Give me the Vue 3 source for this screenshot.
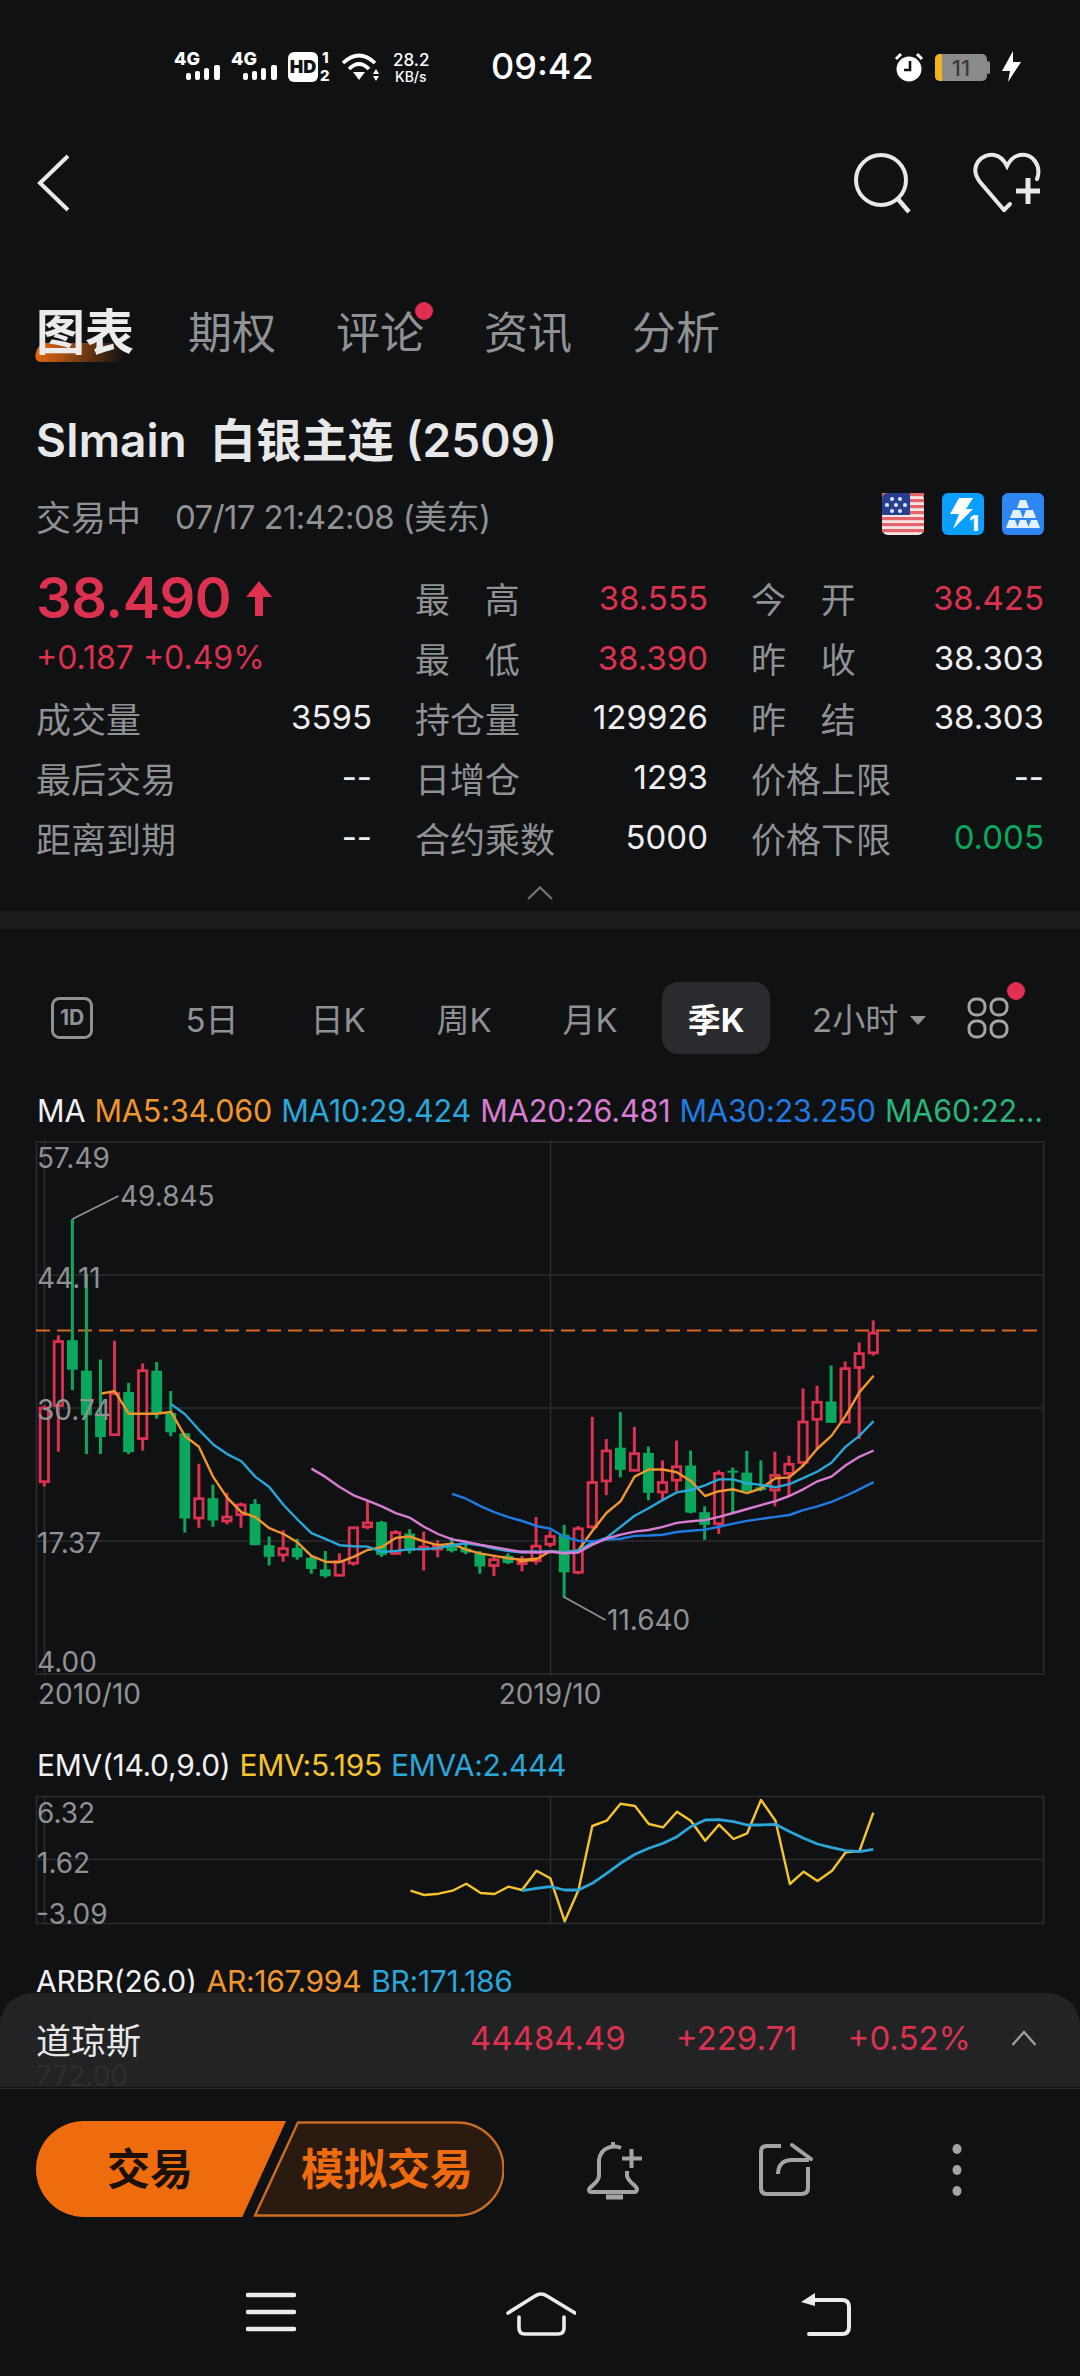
<script setup>
const red = '#dc3250'
const green = '#0aa85c'
const x3 = (z) => z / 2.8
const x4 = (z) => 520 + z / 2.8
const y3 = (z) => 950 + z / 2.0632
const y4 = (z) => 1080 + z / 2.529
const cx = (i) => 44.3 + 14.05 * i

const raw3 = [
  ['r', 940, 945, 1097, 1107], ['r', 795, 808, 940, 1035], ['g', 555, 805, 866, 908], ['g', 668, 868, 960, 1040],
  ['g', 845, 960, 1005, 1040], ['r', 806, 915, 1000, 1000], ['g', 893, 912, 1036, 1040], ['r', 853, 868, 1008, 1033],
  ['g', 850, 868, 955, 967], ['g', 910, 955, 995, 1003], ['g', 997, 997, 1173, 1202], ['r', 1060, 1132, 1172, 1192],
  ['g', 1103, 1131, 1177, 1190], ['r', 1120, 1170, 1178, 1185], ['r', 1140, 1145, 1165, 1192], ['g', 1133, 1143, 1228, 1228],
  ['g', 1210, 1228, 1252, 1270], ['r', 1197, 1235, 1248, 1262], ['g', 1215, 1234, 1253, 1258], ['g', 1250, 1254, 1277, 1287],
  ['g', 1240, 1278, 1292, 1295], ['r', 1245, 1262, 1290, 1292], ['r', 1190, 1192, 1265, 1270], ['r', 1137, 1182, 1190, 1195],
  ['g', 1178, 1180, 1248, 1252], ['r', 1197, 1202, 1245, 1247], ['g', 1195, 1204, 1240, 1245], ['r', 1200, 1232, 1236, 1280],
  ['r', 1218, 1230, 1236, 1253], ['g', 1212, 1228, 1240, 1243], ['g', 1225, 1235, 1243, 1247], ['g', 1240, 1245, 1272, 1287],
  ['r', 1250, 1258, 1270, 1292], ['g', 1245, 1250, 1265, 1267], ['r', 1250, 1260, 1266, 1282], ['r', 1170, 1230, 1260, 1268],
  ['r', 1198, 1210, 1226, 1232]
]
const raw4 = [
  ['g', 1125, 1150, 1245, 1310], ['r', 1128, 1135, 1245, 1250], ['r', 852, 1018, 1130, 1135], ['r', 908, 938, 1014, 1050],
  ['g', 840, 930, 986, 1005], ['r', 877, 945, 987, 990], ['g', 927, 943, 1044, 1063], ['r', 962, 1018, 1042, 1060],
  ['r', 912, 978, 1012, 1040], ['g', 937, 975, 1094, 1096], ['g', 1078, 1093, 1125, 1163], ['r', 987, 995, 1122, 1148],
  ['g', 980, 988, 992, 1095], ['g', 938, 993, 1040, 1040], ['g', 962, 1030, 1037, 1040], ['r', 940, 1000, 1037, 1078],
  ['r', 950, 972, 995, 1050], ['r', 780, 865, 967, 975], ['r', 773, 815, 858, 935], ['g', 722, 813, 867, 867],
  ['r', 712, 730, 865, 865], ['r', 664, 692, 727, 908], ['r', 608, 640, 690, 697]
]
const toCandle = (fy, offset) => (c, i) => ({
  x: cx(i + offset), up: c[0] === 'r',
  hi: fy(c[1]), top: fy(c[2]), bot: fy(c[3]), lo: fy(c[4])
})
const candles = [...raw3.map(toCandle(y3, 0)), ...raw4.map(toCandle(y4, 37))]

const pts = (a3, a4) => {
  const out = []
  for (let i = 0; i < a3.length; i += 2) out.push(`${x3(a3[i]).toFixed(1)},${y3(a3[i + 1]).toFixed(1)}`)
  for (let i = 0; i < a4.length; i += 2) out.push(`${x4(a4[i]).toFixed(1)},${y4(a4[i + 1]).toFixed(1)}`)
  return out.join(' ')
}
const maLines = [
  { color: '#f0962e', points: pts(
    [285,915,321,910,361,957,400,957,439,957,479,953,518,1003,557,1025,597,1087,636,1130,676,1160,715,1170,754,1193,794,1205,833,1222,872,1250,911,1262,951,1263,990,1252,1029,1238,1069,1232,1108,1213,1147,1210,1187,1220,1226,1228,1266,1225,1305,1237,1344,1245,1384,1250,1423,1255,1462,1258,1502,1256],
    [0,1218,46,1212,85,1192,124,1195,163,1190,203,1140,242,1095,282,1065,321,1003,360,985,400,985,439,992,479,1015,518,1052,557,1040,597,1035,636,1045,675,1033,715,1007,754,1005,793,975,833,932,872,900,911,850,950,790,990,748]) },
  { color: '#2ba6d8', points: pts(
    [479,937,518,958,557,990,597,1020,636,1040,676,1055,715,1087,754,1108,794,1145,833,1175,872,1203,911,1215,951,1228,990,1230,1029,1231,1069,1242,1108,1240,1147,1236,1187,1236,1226,1234,1266,1228,1305,1224,1344,1228,1384,1235,1423,1240,1462,1243,1502,1241],
    [0,1193,46,1193,85,1192,124,1195,163,1190,203,1170,242,1158,282,1130,321,1102,360,1083,400,1062,439,1043,479,1037,518,1025,557,1010,597,1010,636,1020,675,1024,715,1030,754,1022,793,1007,833,990,872,968,911,928,950,900,990,863]) },
  { color: '#1f7ce2', points: pts(
    [1266,1122,1305,1132,1344,1147,1384,1160,1423,1170,1462,1178,1502,1188],
    [0,1113,46,1128,85,1135,124,1155,163,1165,203,1167,242,1162,282,1160,321,1153,360,1152,400,1150,439,1143,479,1140,518,1137,557,1130,597,1122,636,1115,675,1110,715,1105,754,1100,793,1088,833,1078,872,1067,911,1052,950,1035,990,1017]) },
  { color: '#d87dd2', points: pts(
    [872,1070,911,1087,951,1108,990,1125,1029,1136,1069,1148,1108,1162,1147,1171,1187,1190,1226,1205,1266,1216,1305,1221,1344,1227,1384,1232,1423,1237,1462,1242,1502,1243],
    [0,1193,46,1195,85,1193,124,1197,163,1195,203,1175,242,1160,282,1150,321,1142,360,1138,400,1130,439,1120,479,1116,518,1113,557,1105,597,1095,636,1085,675,1075,715,1065,754,1052,793,1035,833,1015,872,1003,911,975,950,953,990,937]) }
]
const z5 = (a) => {
  const out = []
  for (let i = 0; i < a.length; i += 2) out.push(`${(a[i] / 1.452).toFixed(1)},${(1720 + a[i + 1] / 3).toFixed(1)}`)
  return out.join(' ')
}
const emvLine = z5([596,512,616,525,637,521,657,512,677,491,698,519,718,522,738,500,758,510,779,452,799,475,820,604,840,510,860,318,881,302,901,251,922,258,942,312,963,322,983,275,1003,302,1024,362,1044,314,1065,357,1085,340,1105,240,1126,302,1147,492,1167,455,1187,483,1208,452,1228,397,1248,393,1268,278])
const emvaLine = z5([758,512,779,505,799,500,820,510,840,510,860,490,881,460,901,430,922,403,942,385,963,370,983,350,1003,320,1024,300,1044,299,1065,305,1085,315,1105,315,1126,313,1147,335,1167,355,1187,372,1208,383,1228,392,1248,395,1268,388])

const gridY = [1142, 1275, 1408, 1541, 1674]
const axis = [
  { t: '57.49', y: 1168 }, { t: '44.11', y: 1288 }, { t: '30.74', y: 1420 }, { t: '17.37', y: 1553 }, { t: '4.00', y: 1672 }
]
const tabs = ['期权', '评论', '资讯', '分析']
const periods = ['5日', '日K', '周K', '月K']

const stats = [
  { col: 2, row: 1, label: '最 高', value: '38.555', spread: true, cls: 'up' },
  { col: 3, row: 1, label: '今 开', value: '38.425', spread: true, cls: 'up' },
  { col: 2, row: 2, label: '最 低', value: '38.390', spread: true, cls: 'up' },
  { col: 3, row: 2, label: '昨 收', value: '38.303', spread: true },
  { col: 1, row: 3, label: '成交量', value: '3595' },
  { col: 2, row: 3, label: '持仓量', value: '129926' },
  { col: 3, row: 3, label: '昨 结', value: '38.303', spread: true },
  { col: 1, row: 4, label: '最后交易', value: '--' },
  { col: 2, row: 4, label: '日增仓', value: '1293' },
  { col: 3, row: 4, label: '价格上限', value: '--' },
  { col: 1, row: 5, label: '距离到期', value: '--' },
  { col: 2, row: 5, label: '合约乘数', value: '5000' },
  { col: 3, row: 5, label: '价格下限', value: '0.005', cls: 'down' }
]
const flagStripes = [0, 1, 2, 3, 4, 5, 6]
</script>

<template>
  <div class="page">
    <div class="main">
      <header class="status">
        <svg class="st-left" viewBox="170 45 265 40" width="265" height="40">
          <g fill="#fff">
            <text x="174" y="64" class="st-4g">4G</text>
            <rect x="186" y="72" width="5" height="7" rx="2" /><rect x="195" y="70" width="5" height="9" rx="2" /><rect x="204" y="67" width="5" height="12" rx="2" /><rect x="214" y="64" width="6" height="15" rx="2" />
            <text x="231" y="64" class="st-4g">4G</text>
            <rect x="243" y="72" width="5" height="7" rx="2" /><rect x="252" y="70" width="5" height="9" rx="2" /><rect x="261" y="67" width="5" height="12" rx="2" /><rect x="271" y="64" width="6" height="15" rx="2" />
            <rect x="288" y="51" width="30" height="30" rx="6" />
            <text x="303" y="72" text-anchor="middle" class="st-hd">HD</text>
            <text x="322" y="62" class="st-sim">1</text>
            <text x="320" y="80" class="st-sim">2</text>
            <path d="M353 71h12l-6 8z" />
            <path d="M376 68l3 5h-6zM376 80l3-5h-6z" />
          </g>
          <g fill="none" stroke="#fff" stroke-width="3.6">
            <path d="M343 62 Q359 47 375 62" />
            <path d="M349 68 Q359 58 369 68" />
          </g>
          <text x="393" y="65" class="st-speed" fill="#fff">28.2</text>
          <text x="395" y="81" class="st-unit" fill="#fff">KB/s</text>
        </svg>
        <div class="clock">09:42</div>
        <svg class="st-right" viewBox="890 45 135 40" width="135" height="40">
          <circle cx="909" cy="68" r="12.5" fill="#fff" />
          <path d="M910 60v9h-6" fill="none" stroke="#101113" stroke-width="2.6" />
          <path d="M896 58l5-5M922 58l-5-5" stroke="#fff" stroke-width="3" />
          <rect x="935" y="53" width="52" height="27" rx="5" fill="#8b8b8b" />
          <path d="M940 53h2v27h-2a5 5 0 0 1-5-5V58a5 5 0 0 1 5-5z" fill="#f0b51e" />
          <rect x="987" y="60" width="3" height="13" rx="1.5" fill="#8b8b8b" />
          <text x="961" y="75" text-anchor="middle" class="st-batt" fill="#3a3a3a">11</text>
          <path d="M1013 50l-11 20h8l-2 11 13-20h-8z" fill="#fff" />
        </svg>
      </header>

      <nav class="nav">
        <svg viewBox="0 0 40 60" width="40" height="60">
          <path d="M32 3 L4 30 L32 57" fill="none" stroke="#e8e8e9" stroke-width="4" transform="translate(0 0)" />
        </svg>
        <div class="nav-right">
          <svg viewBox="0 0 64 64" width="64" height="64">
            <circle cx="29" cy="29" r="25" fill="none" stroke="#e8e8e9" stroke-width="4" />
            <path d="M46 48 L57 61" stroke="#e8e8e9" stroke-width="4.5" />
          </svg>
          <svg viewBox="0 0 70 64" width="70" height="64">
            <path d="M32 59 L8 31 C-4 15 10 2 22 4 C28 5 32 9 35 15 C38 9 42 5 48 4 C60 2 70 14 65 28" fill="none" stroke="#e8e8e9" stroke-width="4" stroke-linecap="round" />
            <path d="M32 59 L38 53" fill="none" stroke="#e8e8e9" stroke-width="4" stroke-linecap="round" />
            <path d="M56 27V53M44 40H68" stroke="#e8e8e9" stroke-width="5" />
          </svg>
        </div>
      </nav>

      <div class="tabs">
        <div class="tab active"><span class="tab-mark"></span><span class="tab-text">图表</span></div>
        <div v-for="t in tabs" :key="t" class="tab">
          {{ t }}<span v-if="t === '评论'" class="tab-dot"></span>
        </div>
      </div>

      <h1 class="title">SImain&nbsp; 白银主连 (2509)</h1>

      <div class="meta">
        <span class="meta-state">交易中</span>
        <span class="meta-time">07/17 21:42:08 (美东)</span>
        <div class="badges">
          <svg viewBox="0 0 42 42" width="42" height="42">
            <rect width="42" height="42" rx="6" fill="#f6e4e4" />
            <g fill="#e5646a">
              <rect v-for="s in flagStripes" :key="s" x="0" :y="s * 6" width="42" height="3.2" />
            </g>
            <path d="M6 0H28V22H0V6a6 6 0 0 1 6-6z" fill="#26408f" />
            <g fill="#dfe6f5">
              <circle cx="10" cy="6" r="2" /><circle cx="18" cy="6" r="2" /><circle cx="5" cy="12" r="2" /><circle cx="14" cy="12" r="2" /><circle cx="23" cy="12" r="2" /><circle cx="10" cy="18" r="2" /><circle cx="18" cy="18" r="2" />
            </g>
          </svg>
          <svg viewBox="0 0 42 42" width="42" height="42">
            <rect width="42" height="42" rx="6" fill="#0a9eff" />
            <path d="M17 5H31L24 16H31L11 36L17 21H8z" fill="#fff" />
            <text x="32" y="38" text-anchor="middle" class="badge-1" fill="#fff">1</text>
          </svg>
          <svg viewBox="0 0 42 42" width="42" height="42">
            <rect width="42" height="42" rx="6" fill="#2e86f2" />
            <g fill="#e2f0ff">
              <path d="M18 7h6l3 8H15z" /><path d="M11 17h7l3 8H8z" /><path d="M24 17h7l3 8H21z" />
              <path d="M7 27h6l3 8H4z" /><path d="M18 27h6l3 8H15z" /><path d="M29 27h6l3 8H26z" />
            </g>
          </svg>
        </div>
      </div>

      <section class="stats">
        <div class="price-cell">
          <span class="price">38.490</span>
          <svg viewBox="0 0 28 36" width="28" height="36">
            <path d="M14 1L27 17H18V36H10V17H1z" fill="#dc3250" />
          </svg>
        </div>
        <div class="change-cell">+0.187 +0.49%</div>
        <div
          v-for="s in stats"
          :key="s.label"
          class="stat"
          :style="{ gridColumn: s.col, gridRow: s.row }"
        >
          <span class="stat-label" :class="{ spread: s.spread }">{{ s.label }}</span>
          <span class="stat-value" :class="s.cls">{{ s.value }}</span>
        </div>
      </section>

      <div class="collapse">
        <svg viewBox="0 0 26 14" width="26" height="14">
          <path d="M1 13L13 1.5L25 13" fill="none" stroke="#6f7174" stroke-width="2.4" />
        </svg>
      </div>
      <div class="divider"></div>

      <div class="periods">
        <svg class="p-1d" viewBox="0 0 42 42" width="42" height="42">
          <rect x="1.5" y="1.5" width="39" height="39" rx="7" fill="none" stroke="#8f9194" stroke-width="3" />
          <text x="21" y="28" text-anchor="middle" class="p-1d-text" fill="#8f9194">1D</text>
        </svg>
        <div class="p-list">
          <div v-for="p in periods" :key="p" class="p-item">{{ p }}</div>
          <div class="p-item"><span class="p-pill">季K</span></div>
        </div>
        <div class="p-more">2小时<i class="p-caret"></i></div>
        <div class="p-grid">
          <svg viewBox="0 0 42 42" width="42" height="42">
            <g fill="none" stroke="#a2a4a6" stroke-width="3">
              <rect x="2" y="2" width="16" height="16" rx="7" /><rect x="24" y="2" width="16" height="16" rx="7" />
              <rect x="2" y="24" width="16" height="16" rx="7" /><rect x="24" y="24" width="16" height="16" rx="7" />
            </g>
          </svg>
          <span class="p-dot"></span>
        </div>
      </div>

      <div class="legend legend-ma">
        <span class="c-white">MA</span>
        <span class="c-ma5">MA5:34.060</span>
        <span class="c-ma10">MA10:29.424</span>
        <span class="c-ma20">MA20:26.481</span>
        <span class="c-ma30">MA30:23.250</span>
        <span class="c-ma60">MA60:22...</span>
      </div>

      <svg class="chart" viewBox="0 1130 1080 580" width="1080" height="580">
        <g stroke="#2b2c2f" stroke-width="1.6">
          <line v-for="y in gridY" :key="y" x1="36" x2="1044" :y1="y" :y2="y" />
          <line x1="36.5" x2="36.5" y1="1142" y2="1674" />
          <line x1="44.5" x2="44.5" y1="1142" y2="1674" />
          <line x1="550.5" x2="550.5" y1="1142" y2="1674" />
          <line x1="1043.5" x2="1043.5" y1="1142" y2="1674" />
        </g>
        <line x1="36" x2="1044" y1="1330.5" y2="1330.5" stroke="#d9691f" stroke-width="2" stroke-dasharray="14 7" />
        <g v-for="(c, i) in candles" :key="i">
          <line :x1="c.x" :x2="c.x" :y1="c.hi" :y2="c.lo" :stroke="c.up ? red : green" stroke-width="3" />
          <rect v-if="c.up" :x="c.x - 4.2" :y="c.top" width="8.4" :height="c.bot - c.top" fill="#101113" :stroke="red" stroke-width="2.8" />
          <rect v-else :x="c.x - 5.4" :y="c.top" width="10.8" :height="Math.max(c.bot - c.top, 2)" :fill="green" />
        </g>
        <polyline v-for="l in maLines" :key="l.color" :points="l.points" fill="none" :stroke="l.color" stroke-width="2.4" stroke-linejoin="round" />
        <path d="M72.5 1219L118.5 1196" stroke="#8f9194" stroke-width="1.6" fill="none" />
        <path d="M564 1597L605.5 1620" stroke="#8f9194" stroke-width="1.6" fill="none" />
        <text x="120" y="1206" class="axis">49.845</text>
        <text x="607" y="1630" class="axis">11.640</text>
        <text v-for="a in axis" :key="a.t" x="37" :y="a.y" class="axis">{{ a.t }}</text>
        <text x="38" y="1704" class="axis">2010/10</text>
        <text x="550" y="1704" text-anchor="middle" class="axis">2019/10</text>
      </svg>

      <div class="legend legend-emv">
        <span class="c-white">EMV(14.0,9.0)</span>
        <span class="c-yellow">EMV:5.195</span>
        <span class="c-ma10">EMVA:2.444</span>
      </div>

      <svg class="chart" viewBox="0 1785 1080 150" width="1080" height="150">
        <g stroke="#2b2c2f" stroke-width="1.6">
          <line x1="36" x2="1044" y1="1796.5" y2="1796.5" />
          <line x1="36" x2="1044" y1="1859.5" y2="1859.5" />
          <line x1="36" x2="1044" y1="1923.5" y2="1923.5" />
          <line x1="36.5" x2="36.5" y1="1796" y2="1924" />
          <line x1="44.5" x2="44.5" y1="1796" y2="1924" />
          <line x1="550.5" x2="550.5" y1="1796" y2="1924" />
          <line x1="1043.5" x2="1043.5" y1="1796" y2="1924" />
        </g>
        <polyline :points="emvLine" fill="none" stroke="#f5c42c" stroke-width="2.4" stroke-linejoin="round" />
        <polyline :points="emvaLine" fill="none" stroke="#2ba6d8" stroke-width="2.8" stroke-linejoin="round" />
        <text x="37" y="1823" class="axis">6.32</text>
        <text x="37" y="1873" class="axis">1.62</text>
        <text x="36" y="1924" class="axis">-3.09</text>
      </svg>

      <div class="legend legend-ar">
        <span class="c-white">ARBR(26.0)</span>
        <span class="c-ma5">AR:167.994</span>
        <span class="c-ma10">BR:171.186</span>
      </div>

      <aside class="index-panel">
        <span class="ghost">772.00</span>
        <span class="index-name">道琼斯</span>
        <span class="index-value">44484.49</span>
        <span class="index-delta">+229.71</span>
        <span class="index-pct">+0.52%</span>
        <svg viewBox="0 0 26 16" width="26" height="16">
          <path d="M1.5 15L13 2L24.5 15" fill="none" stroke="#9c9ea0" stroke-width="2.4" />
        </svg>
      </aside>
    </div>

    <div class="actions">
      <div class="trade">
        <div class="trade-main">交易</div>
        <div class="trade-sim">
          <svg class="trade-sim-bg" viewBox="0 0 251 96" width="251" height="96">
            <path d="M45 1.5H204A46.5 46.5 0 0 1 204 94.5H2z" fill="#2a1a10" stroke="#c96c24" stroke-width="2.4" />
          </svg>
          <span>模拟交易</span>
        </div>
      </div>
      <svg class="a-bell" viewBox="0 0 60 60" width="60" height="60">
        <g fill="none" stroke="#a2a4a6" stroke-width="4">
          <path d="M28 2V7" />
          <path d="M36 8C30 5 16 6 14 20L14 36C13 44 4 46 4 50C4 52 5 52 7 52H49C52 52 52 51 52 49C51 45 44 43 42 36V31" />
          <path d="M37 18.5H57M46.5 9V28" />
          <path d="M21 57H38" stroke-width="5" />
        </g>
      </svg>
      <svg class="a-share" viewBox="0 0 60 60" width="60" height="60">
        <g fill="none" stroke="#a2a4a6" stroke-width="4">
          <path d="M26 6H12Q6 6 6 12V48Q6 54 12 54H46Q53 54 53 48V27" />
          <path d="M23 34C23 25 28 20 37 20H54" />
          <path d="M37 5L56 19" stroke-linecap="round" />
        </g>
      </svg>
      <svg class="a-more" viewBox="0 0 14 56" width="14" height="56">
        <g fill="#a2a4a6">
          <ellipse cx="7" cy="7" rx="4.5" ry="5" /><ellipse cx="7" cy="28" rx="4.5" ry="5" /><ellipse cx="7" cy="49" rx="4.5" ry="5" />
        </g>
      </svg>
    </div>

    <div class="sysnav">
      <svg class="s-menu" viewBox="0 0 50 40" width="50" height="40">
        <g stroke="#ececec" stroke-width="4.5" stroke-linecap="round">
          <path d="M2 3H48M2 20H48M2 37H48" />
        </g>
      </svg>
      <svg class="s-home" viewBox="0 0 70 44" width="70" height="44">
        <g fill="none" stroke="#ececec" stroke-width="3.6" stroke-linecap="round">
          <path d="M2 21L29 4Q35 0 41 4L69 21" />
          <path d="M13 25V36Q13 42 19 42H52Q58 42 58 36V25" />
        </g>
      </svg>
      <svg class="s-back" viewBox="0 0 52 44" width="52" height="44">
        <path d="M1 10L15 1V14z" fill="#ececec" />
        <path d="M14 8H42Q49 8 49 15V35Q49 42 42 42H9" fill="none" stroke="#ececec" stroke-width="4" stroke-linecap="round" />
      </svg>
    </div>
  </div>
</template>

<style scoped>
.page {
  width: 1080px;
  height: 2376px;
  overflow: hidden;
  background: #101113;
  color: #e8e8e9;
  font-family: Inter, "Noto Sans CJK SC", sans-serif;
}
.main {
  position: relative;
  height: 2088px;
  overflow: hidden;
}
.status {
  height: 100px;
  box-sizing: border-box;
  padding: 46px 55px 0 170px;
  display: flex;
  align-items: flex-start;
}
.status svg { display: block; flex: none; }
.st-4g { font-size: 18px; font-weight: 800; }
.st-hd { font-size: 18px; font-weight: 900; fill: #101113; }
.st-sim { font-size: 15px; font-weight: 800; }
.st-speed { font-size: 17px; font-weight: 500; }
.st-unit { font-size: 14px; font-weight: 500; }
.st-batt { font-size: 22px; font-weight: 500; }
.clock {
  margin-left: 56px;
  width: 110px;
  font-size: 36px;
  font-weight: 500;
  line-height: 40px;
  color: #fff;
}
.st-right { margin-left: auto; }
.nav {
  height: 166px;
  padding: 0 36px 0 36px;
  display: flex;
  align-items: center;
  justify-content: space-between;
}
.nav-right {
  display: flex;
  align-items: center;
  gap: 56px;
  margin-right: 2px;
}
.tabs {
  height: 134px;
  box-sizing: border-box;
  padding-left: 36px;
  display: flex;
  align-items: center;
  gap: 59px;
  font-size: 44px;
  color: #8f9194;
}
.tab { position: relative; line-height: 60px; width: 89px; white-space: nowrap; }
.tab.active {
  font-size: 49px;
  font-weight: 700;
  color: #ebebec;
  width: 94px;
  margin-right: -1px;
}
.tab-text { position: relative; }
.tab-mark {
  position: absolute;
  left: 0;
  top: 40px;
  width: 90px;
  height: 19px;
  border-radius: 8px 0 0 8px;
  background: linear-gradient(90deg, #e56a14, rgba(229, 106, 20, 0));
  transform: skewX(-16deg);
}
.tab-dot {
  position: absolute;
  right: -8px;
  top: -1px;
  width: 18px;
  height: 18px;
  border-radius: 50%;
  background: #e02f50;
}
.title {
  margin: 0;
  height: 80px;
  padding-left: 36px;
  font-size: 46px;
  font-weight: 600;
  line-height: 80px;
  color: #e8e8e9;
  white-space: nowrap;
}
.meta {
  height: 70px;
  padding: 0 36px;
  display: flex;
  align-items: center;
  color: #8f9194;
}
.meta-state { font-size: 35px; width: 139px; }
.meta-time { font-size: 33px; letter-spacing: -0.6px; white-space: nowrap; }
.badges {
  margin-left: auto;
  display: flex;
  gap: 18px;
  margin-top: -2px;
}
.badges svg { display: block; }
.badge-1 { font-size: 22px; font-weight: 800; }
.stats {
  margin: 18px 36px 0;
  height: 299px;
  display: grid;
  grid-template-columns: 336px 293px 293px;
  grid-template-rows: repeat(5, 59.8px);
  column-gap: 43px;
  align-items: center;
  margin-right: 36px;
}
.price-cell {
  grid-column: 1;
  grid-row: 1;
  display: flex;
  align-items: center;
  gap: 14px;
}
.price {
  font-size: 56px;
  font-weight: 600;
  color: #dc3250;
  letter-spacing: -0.5px;
}
.change-cell {
  grid-column: 1;
  grid-row: 2;
  font-size: 32px;
  color: #dc3250;
  white-space: nowrap;
}
.stat {
  display: flex;
  align-items: center;
  justify-content: space-between;
  white-space: nowrap;
}
.stat-label { font-size: 35px; color: #8f9194; }
.stat-label.spread { white-space: pre; word-spacing: 25px; }
.stat-value { font-size: 33px; color: #eeeeef; }
.stat-value.up { color: #dc3250; }
.stat-value.down { color: #0aa85c; }
.collapse {
  height: 44px;
  display: flex;
  justify-content: center;
  padding-top: 19px;
  box-sizing: border-box;
}
.collapse svg { display: block; }
.divider { height: 18px; background: #1b1c1e; }
.periods {
  margin-top: 53px;
  height: 72px;
  padding-left: 51px;
  display: flex;
  align-items: center;
  font-size: 33px;
  color: #8f9194;
}
.p-1d { flex: none; display: block; }
.p-1d-text { font-size: 21px; font-weight: 700; }
.p-list { margin-left: 56px; display: flex; }
.p-item {
  width: 126px;
  height: 72px;
  display: flex;
  align-items: center;
  justify-content: center;
  white-space: nowrap;
}
.p-pill {
  width: 108px;
  height: 72px;
  border-radius: 16px;
  background: #2a2b2e;
  color: #fff;
  font-weight: 700;
  display: flex;
  align-items: center;
  justify-content: center;
}
.p-more {
  margin-left: 33px;
  display: flex;
  align-items: center;
  gap: 12px;
  white-space: nowrap;
}
.p-caret {
  width: 0;
  height: 0;
  border-left: 8px solid transparent;
  border-right: 8px solid transparent;
  border-top: 9px solid #8f9194;
  margin-top: 4px;
}
.p-grid { position: relative; margin-left: 41px; height: 42px; }
.p-grid svg { display: block; }
.p-dot {
  position: absolute;
  right: -16px;
  top: -15px;
  width: 18px;
  height: 18px;
  border-radius: 50%;
  background: #e02f50;
}
.legend {
  height: 40px;
  padding-left: 36px;
  display: flex;
  align-items: center;
  white-space: nowrap;
}
.legend-ma { margin-top: 36px; font-size: 30.5px; gap: 9px; letter-spacing: -0.1px; padding-left: 37px; }
.legend-emv { margin-top: 35px; font-size: 30px; gap: 9px; letter-spacing: -0.3px; padding-left: 37px; }
.legend-ar { margin-top: 26px; font-size: 30px; gap: 10px; letter-spacing: -0.3px; }
.c-white { color: #f0f0f1; }
.c-ma5 { color: #f0962e; }
.c-ma10 { color: #2ba6d8; }
.c-ma20 { color: #d87dd2; }
.c-ma30 { color: #1f7ce2; }
.c-ma60 { color: #2ab678; }
.c-yellow { color: #f5c42c; }
.chart { display: block; }
.axis { font-size: 28px; fill: #8f9194; }
.index-panel {
  position: absolute;
  left: 0;
  right: 0;
  top: 1993px;
  height: 94px;
  box-sizing: border-box;
  border-radius: 32px 32px 0 0;
  background: #222325;
  display: flex;
  align-items: center;
  padding: 0 43px 0 36px;
  font-size: 33px;
  color: #dc3250;
  padding-bottom: 4px;
}
.ghost {
  position: absolute;
  left: 36px;
  bottom: -6px;
  font-size: 28px;
  color: #2d2e30;
}
.index-name { font-size: 35px; color: #e8e8e9; }
.index-value { margin-left: auto; }
.index-delta { margin-left: 50px; }
.index-pct { margin-left: 50px; }
.index-panel svg { margin-left: 40px; display: block; }
.actions {
  height: 160px;
  box-sizing: border-box;
  border-top: 1px solid #2a2b2d;
  padding: 32px 0 0 36px;
  display: flex;
  align-items: flex-start;
}
.trade {
  display: flex;
  width: 468px;
  height: 96px;
  flex: none;
  font-size: 43px;
  font-weight: 700;
  white-space: nowrap;
}
.trade-main {
  width: 250px;
  height: 96px;
  flex: none;
  box-sizing: border-box;
  padding-left: 71px;
  line-height: 96px;
  background: #ee6c0d;
  color: #1a1008;
  border-radius: 48px 0 0 48px;
  clip-path: polygon(0 0, 100% 0, 82.5% 100%, 0 100%);
}
.trade-sim {
  position: relative;
  margin-left: -33px;
  width: 251px;
  height: 96px;
  flex: none;
  padding-left: 48px;
  box-sizing: border-box;
  line-height: 96px;
  color: #ee6c0d;
}
.trade-sim span { position: relative; }
.trade-sim-bg { position: absolute; left: 0; top: 0; display: block; }
.a-bell { margin: 19px 0 0 81px; display: block; flex: none; }
.a-share { margin: 19px 0 0 110px; display: block; flex: none; }
.a-more { margin: 21px 0 0 135px; display: block; flex: none; }
.sysnav {
  height: 128px;
  display: flex;
  align-items: flex-start;
  padding: 44px 0 0 246px;
  box-sizing: border-box;
}
.sysnav svg { display: block; flex: none; }
.s-home { margin-left: 210px; }
.s-back { margin-left: 224px; }
</style>

<style>
html, body { background: #101113; }
</style>
